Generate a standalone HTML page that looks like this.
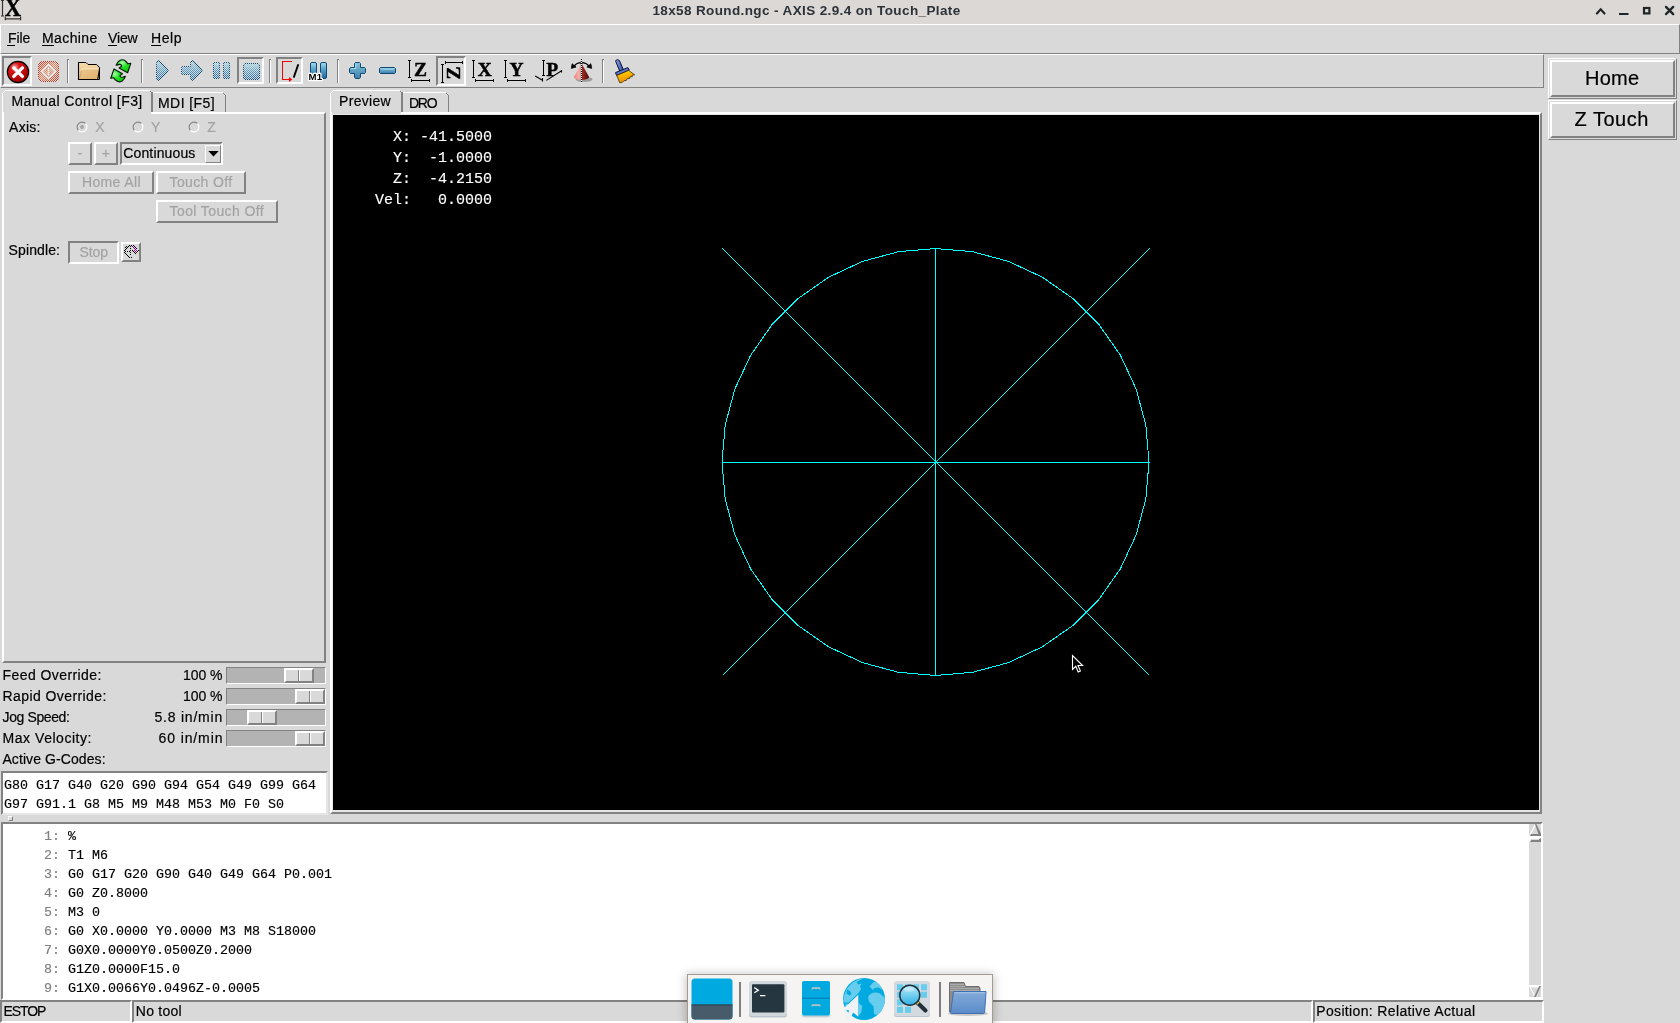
<!DOCTYPE html>
<html>
<head>
<meta charset="utf-8">
<title>18x58 Round.ngc - AXIS 2.9.4 on Touch_Plate</title>
<style>
*{box-sizing:border-box;margin:0;padding:0}
html,body{width:1680px;height:1023px;overflow:hidden;background:#d9d9d9}
body{font-family:"Liberation Sans",sans-serif;font-size:14px;letter-spacing:0.5px;color:#000;position:relative;-webkit-text-stroke:0.2px currentColor}
#root{position:absolute;left:0;top:0;width:1680px;height:1023px;will-change:transform;transform:translateZ(0)}
.a{position:absolute}
.t{position:absolute;white-space:nowrap;line-height:1}
.r1{border:1px solid;border-color:#fff #828282 #828282 #fff}
.r2{border:2px solid;border-color:#fff #828282 #828282 #fff}
.s1{border:1px solid;border-color:#828282 #fff #fff #828282}
.s2{border:2px solid;border-color:#828282 #fff #fff #828282}
.dis{color:#a3a3a3}
.mono{font-family:"Liberation Mono",monospace;letter-spacing:0;font-size:13.33px;white-space:pre;-webkit-text-stroke:0.15px currentColor}
.px{position:absolute;background:#fff}
.pd{position:absolute;background:#828282}
u{text-decoration:none;border-bottom:1px solid #000}
svg{position:absolute;overflow:visible}
</style>
</head>
<body>
<div id="root">
<div class="a" style="left:0;top:0;width:1680px;height:24px;background:#dcd8d5"></div>
<div class="t" style="left:0;top:4px;width:1613px;text-align:center;font-weight:bold;font-size:13.5px;color:#2c3237;letter-spacing:0.38px;-webkit-text-stroke:0">18x58 Round.ngc - AXIS 2.9.4 on Touch_Plate</div>
<!-- window icon -->
<svg style="left:0;top:0" width="24" height="22" viewBox="0 0 24 22">
 <text x="4.800" y="16.100" font-family="Liberation Serif" font-weight="bold" font-size="24.200" fill="#000" stroke="#000" stroke-width="0.450" letter-spacing="0" textLength="16.300" lengthAdjust="spacingAndGlyphs">X</text>
 <path d="M2.500 0v16M1 0.500h3M1 16h3M4.800 18.800h16M5.300 16.600v3.600M20.600 16.600v3.600" stroke="#333" stroke-width="1.200" fill="none"/>
</svg>
<!-- window buttons -->
<svg style="left:1590px;top:0" width="90" height="24" viewBox="1590 0 90 24">
 <path d="M1596.900 13.500l3.800-4.200 3.800 4.200" stroke="#1f2529" stroke-width="2.200" fill="none" stroke-linecap="round"/>
 <rect x="1619" y="13" width="9.5" height="2" fill="#1f2529"/>
 <rect x="1644" y="8" width="5.4" height="5.4" fill="none" stroke="#1f2529" stroke-width="2.2"/>
 <path d="M1666 6.900l7.200 7.200M1673.200 6.900l-7.200 7.200" stroke="#1f2529" stroke-width="2.300" stroke-linecap="round"/>
</svg>
<div class="a r1" style="left:0;top:24px;width:1680px;height:30px"></div>
<div class="t " style="left:8.0px;top:31px;letter-spacing:-0.05px;">File</div>
<div class="t " style="left:42.0px;top:31px;letter-spacing:0.4px;">Machine</div>
<div class="t " style="left:108.0px;top:31px;letter-spacing:-0.13px;">View</div>
<div class="t " style="left:151.0px;top:31px;letter-spacing:0.54px;">Help</div>
<div class="a" style="left:7px;top:45px;width:8px;height:1px;background:#000"></div>
<div class="a" style="left:42px;top:45px;width:12px;height:1px;background:#000"></div>
<div class="a" style="left:108px;top:45px;width:9px;height:1px;background:#000"></div>
<div class="a" style="left:151px;top:45px;width:10px;height:1px;background:#000"></div>
<div class="a r1" style="left:0;top:54px;width:1544px;height:34px"></div>
<div class="pd" style="left:67px;top:59px;width:1px;height:24px"></div><div class="px" style="left:68px;top:60px;width:1px;height:23px"></div><div class="pd" style="left:68px;top:59px;width:1px;height:1px"></div>
<div class="pd" style="left:141px;top:59px;width:1px;height:24px"></div><div class="px" style="left:142px;top:60px;width:1px;height:23px"></div><div class="pd" style="left:142px;top:59px;width:1px;height:1px"></div>
<div class="pd" style="left:269px;top:59px;width:1px;height:24px"></div><div class="px" style="left:270px;top:60px;width:1px;height:23px"></div><div class="pd" style="left:270px;top:59px;width:1px;height:1px"></div>
<div class="pd" style="left:337px;top:59px;width:1px;height:24px"></div><div class="px" style="left:338px;top:60px;width:1px;height:23px"></div><div class="pd" style="left:338px;top:59px;width:1px;height:1px"></div>
<div class="pd" style="left:602px;top:59px;width:1px;height:24px"></div><div class="px" style="left:603px;top:60px;width:1px;height:23px"></div><div class="pd" style="left:603px;top:59px;width:1px;height:1px"></div>
<div class="a s2" style="left:2px;top:56px;width:30px;height:30px"></div>
<div class="a s2" style="left:237px;top:57px;width:27px;height:27px"></div>
<div class="a s2" style="left:276px;top:57px;width:27px;height:27px"></div>
<div class="a s2" style="left:436px;top:56px;width:30px;height:30px"></div>
<svg style="left:0;top:54px" width="700" height="36" viewBox="0 54 700 36">
<defs>
 <pattern id="stbg" width="2" height="2" patternUnits="userSpaceOnUse"><rect x="1" y="0" width="1" height="1" fill="#d9d9d9"/><rect x="0" y="1" width="1" height="1" fill="#d9d9d9"/></pattern>
 <radialGradient id="gEs" cx="0.35" cy="0.28" r="0.75"><stop offset="0" stop-color="#f6a8a8"/><stop offset="0.300" stop-color="#d81414"/><stop offset="1" stop-color="#a40000"/></radialGradient>
 <linearGradient id="gBl" x1="0" y1="0" x2="0" y2="1"><stop offset="0" stop-color="#a8dcec"/><stop offset="0.45" stop-color="#58a0c8"/><stop offset="1" stop-color="#1f669c"/></linearGradient>
 <linearGradient id="gBl2" x1="0" y1="0" x2="0" y2="1"><stop offset="0" stop-color="#86c6de"/><stop offset="1" stop-color="#3b7eab"/></linearGradient>
 <linearGradient id="gFo" x1="0" y1="0" x2="0" y2="1"><stop offset="0" stop-color="#f6dcaa"/><stop offset="1" stop-color="#e2b777"/></linearGradient>
 <linearGradient id="gFo2" x1="0" y1="0" x2="1" y2="1"><stop offset="0" stop-color="#efc98f"/><stop offset="1" stop-color="#dcae6c"/></linearGradient>
 <radialGradient id="gGr" cx="0.42" cy="0.22" r="0.75"><stop offset="0" stop-color="#b4ffb4"/><stop offset="0.400" stop-color="#2ee42e"/><stop offset="1" stop-color="#06c006"/></radialGradient>
 <radialGradient id="gGr2" cx="0.750" cy="0.600" r="0.750"><stop offset="0" stop-color="#b4ffb4"/><stop offset="0.400" stop-color="#2ee42e"/><stop offset="1" stop-color="#06c006"/></radialGradient>
 <linearGradient id="gPw" x1="0" y1="0" x2="1" y2="1"><stop offset="0" stop-color="#d0361c"/><stop offset="0.5" stop-color="#e28a60"/><stop offset="1" stop-color="#c4341c"/></linearGradient>
 <linearGradient id="gCl" x1="0" y1="0" x2="1" y2="0"><stop offset="0" stop-color="#ee7a74"/><stop offset="0.6" stop-color="#f6b0aa"/><stop offset="1" stop-color="#e88a84"/></linearGradient>
 <linearGradient id="gCr" x1="0" y1="0" x2="1" y2="0"><stop offset="0" stop-color="#a83228"/><stop offset="1" stop-color="#4a0c08"/></linearGradient>
 <linearGradient id="gHa" x1="0" y1="0" x2="1" y2="0"><stop offset="0" stop-color="#8ea4e4"/><stop offset="1" stop-color="#2a46a6"/></linearGradient>
 <linearGradient id="gBr" x1="0" y1="0" x2="0.3" y2="1"><stop offset="0" stop-color="#ffe000"/><stop offset="1" stop-color="#f08c00"/></linearGradient>
</defs>
<circle cx="18" cy="72" r="10.6" fill="url(#gEs)" stroke="#000" stroke-width="1.2"/>
<path d="M13.8 67.8l8.6 8.6M22.4 67.8l-8.6 8.6" stroke="#fff" stroke-width="3.3" stroke-linecap="round"/>
<g>
<rect x="38.5" y="61.500" width="20" height="20" rx="4.500" fill="url(#gPw)" stroke="#b8341f" stroke-width="1"/>
<path d="M48.500 64.800l6.700 6.700-6.700 6.700-6.700-6.700z" fill="none" stroke="#fff" stroke-width="1.800" opacity="0.900"/>
<path d="M48.500 68v7" stroke="#fff" stroke-width="1.500" opacity="0.900"/>
<rect x="36" y="59" width="26" height="26" fill="url(#stbg)" shape-rendering="crispEdges"/>
</g>
<path d="M78.5 62.5h7.5l2 2h8.5l3 3v12h-21z" fill="url(#gFo)" stroke="#000" stroke-width="1" stroke-linejoin="round"/>
<path d="M79 79.5l2.300-9.300q0.400-1.600 1.900-1.600h16.300l-2 10.900z" fill="url(#gFo2)"/>
<path d="M81.200 70.400q0.400-1.600 1.900-1.600h16" stroke="#fdf0d4" stroke-width="0.900" fill="none"/>
<path d="M79.600 78.500l2-8" stroke="#caa066" stroke-width="0.800" fill="none"/>
<path d="M78.500 62.500v17h19.200l1.800-10.500v-1.500" stroke="#000" stroke-width="1.100" fill="none" stroke-linejoin="round"/>
<path d="M116.2 65.2C116.8 63.4 118 61.600 119.400 60.700C120.800 59.900 123.400 59.600 124.750 60.500C126 61.200 127.200 62.800 127.900 63.800L130.800 63.300 127.600 72.700 119.100 67.900 121.600 66.200C121.600 65.400 121.300 64.900 120.700 64.600C120 64.300 119 64.400 118.500 64.600C117.800 64.900 117 65.200 116.200 65.200Z" fill="url(#gGr)" stroke="#031c03" stroke-width="1.150" stroke-linejoin="round"/>
<path d="M116.2 65.2C116.8 63.4 118 61.600 119.400 60.700C120.800 59.900 123.400 59.600 124.750 60.500C126 61.200 127.200 62.800 127.900 63.800L130.800 63.300 127.600 72.700 119.100 67.900 121.600 66.200C121.600 65.400 121.300 64.900 120.700 64.600C120 64.300 119 64.400 118.500 64.600C117.800 64.900 117 65.200 116.200 65.200Z" fill="url(#gGr2)" stroke="#031c03" stroke-width="1.150" stroke-linejoin="round" transform="rotate(180 120.800 70.800)"/>
<g stroke="#0c4a74" stroke-width="1" fill="url(#gBl)">
<path d="M156.5 62.5l2-2 9.5 9.5v1l-9.5 9.5-2-2z"/>
<path d="M182.5 66.5h8v-4l2-2 9.5 9.5v1l-9.5 9.5-2-2v-4h-8l-1-1v-6z"/>
<rect x="213.5" y="62.5" width="6" height="16" rx="1.5"/>
<rect x="223.5" y="62.5" width="6" height="16" rx="1.5"/>
<rect x="243.5" y="63.5" width="16" height="16" rx="1.5"/>
</g>
<path d="M154 58h16v26h-16zM180 58h24v26h-24zM212 58h20v26h-20zM241 61h21v21h-21z" fill="url(#stbg)" shape-rendering="crispEdges"/>
<path d="M292 61.5h-9.5v18h8" stroke="#f00" stroke-width="1" fill="none" shape-rendering="crispEdges"/>
<path d="M289 77v5l3.4-2.5z" fill="#f00"/>
<path d="M298.3 64.2l-4.6 13.4" stroke="#000" stroke-width="1.9"/>
<rect x="310.5" y="62.5" width="6" height="16" rx="1.5" fill="url(#gBl)" stroke="#0c4a74"/>
<rect x="320.5" y="62.5" width="6" height="16" rx="1.5" fill="url(#gBl)" stroke="#0c4a74"/>
<text x="308.6" y="79.8" font-family="Liberation Sans" font-size="9.5" font-weight="bold" letter-spacing="0" textLength="13.4" lengthAdjust="spacingAndGlyphs" fill="#000" stroke="#fff" stroke-width="2.4" stroke-linejoin="round" paint-order="stroke">M1</text>
<path d="M355.5 62.5h4l1 1v4h4l1 1v4l-1 1h-4v4l-1 1h-4l-1-1v-4h-4l-1-1v-4l1-1h4v-4z" fill="url(#gBl2)" stroke="#0c4a74" stroke-width="1"/>
<path d="M355.7 64v4.5h-4.7" stroke="#b8e6f4" stroke-width="1" fill="none" opacity="0.8"/>
<path d="M380.5 67.5h14l1 1v4l-1 1h-14l-1-1v-4z" fill="url(#gBl2)" stroke="#0c4a74" stroke-width="1"/>
<path d="M381 69h13" stroke="#b8e6f4" stroke-width="1" opacity="0.8"/>
<g stroke="#000" stroke-width="1" fill="none" shape-rendering="crispEdges">
<path d="M409.5 60V78M408 60.5h3M408 77.5h3M411 80.5H430M411.5 79v3M429.5 79v3"/>
<path d="M442.5 64V83M441 64.5h3M441 82.5h3M445 62.5H463M445.5 61v3M462.5 61v3"/>
<path d="M473.5 60V78M472 60.5h3M472 77.5h3M475 80.5H494M475.5 79v3M493.5 79v3"/>
<path d="M505.5 60V78M504 60.5h3M504 77.5h3M507 80.5H526M507.5 79v3M525.5 79v3"/>
<path d="M543.5 60V76M542 60.5h3M542 75.5h3"/>
</g>
<g font-family="Liberation Serif" font-weight="bold" font-size="19.5" fill="#000" stroke="#000" stroke-width="0.45" letter-spacing="0">
<text x="414" y="75.8">Z</text>
<text x="477.8" y="75.8" textLength="14" lengthAdjust="spacingAndGlyphs">X</text>
<text x="509.6" y="75.8" textLength="14" lengthAdjust="spacingAndGlyphs">Y</text>
<text x="546.2" y="75.6" font-size="19.5">P</text>
<text transform="translate(460.2 79.5) rotate(-90)" x="0" y="0">Z</text>
</g>
<path d="M535.2 76l7.3 4.2M542.5 78v3.4M546.4 80.4l15.2-9.7M561.5 70v2.6" stroke="#000" stroke-width="1.1" fill="none"/>
<ellipse cx="584" cy="79.3" rx="8.5" ry="2.6" fill="#000" opacity="0.28"/>
<path d="M581.5 63.5L574 76.8a7.5 3 0 0 0 7.5 3.2z" fill="url(#gCl)"/>
<path d="M581.5 63.5L589 76.8a7.5 3 0 0 1-7.5 3.2z" fill="url(#gCr)"/>
<path d="M573.6 66.6Q576.5 62.9 580 62.6M583 62.6Q586.500 62.9 589.400 66.6" stroke="#000" stroke-width="1.2" fill="none"/>
<path d="M571.3 68.4l0.800-4.700 4 3.400zM591.700 68.400l-0.800-4.700-4 3.400z" fill="#000" stroke="#000" stroke-width="0.700" stroke-linejoin="round"/>
<circle cx="581.500" cy="63" r="1.300" fill="#fff" stroke="#000" stroke-width="0.800"/>
<path d="M581.5 59v24" stroke="#000" stroke-width="1" shape-rendering="crispEdges"/>
<path d="M581.5 60v24" stroke="#fff" stroke-width="1" stroke-dasharray="1 1" shape-rendering="crispEdges"/>
<path d="M615.6 61c0.6-1.8 3.2-1.8 4 0l4.2 9.6-3.6 1.8z" fill="url(#gHa)" stroke="#0a0f30" stroke-width="1" stroke-linejoin="round"/>
<path d="M615.5 72.6l12.4-5 1.4 2.6-12.6 5.4z" fill="#5a78cc" stroke="#0a0f30" stroke-width="1" stroke-linejoin="round"/>
<path d="M616.8 75.4l11.8-5 6 4.4-2.6 0.4 0.3 1.5-2.4 0.2-0.2 1.6-2.6 0.2-0.8 1.8-2.4 0.2-1.4 1.6-2.8 0.4z" fill="url(#gBr)" stroke="#2a1800" stroke-width="0.7" stroke-linejoin="round"/>
</svg>
<div class="a r1" style="left:1548px;top:58px;width:129px;height:41px"></div>
<div class="a r2" style="left:1550px;top:60px;width:125px;height:37px"></div>
<div class="t " style="left:1585.0px;top:68px;font-size:20px;letter-spacing:0.27px;">Home</div>
<div class="a r1" style="left:1548px;top:100px;width:129px;height:40px"></div>
<div class="a r2" style="left:1550px;top:102px;width:125px;height:36px"></div>
<div class="t " style="left:1574.5px;top:109px;font-size:20px;letter-spacing:0.5px;">Z Touch</div>
<div class="a r2" style="left:2px;top:112px;width:324px;height:551px"></div>
<div class="a" style="left:4px;top:112px;width:147px;height:2px;background:#d9d9d9"></div>
<div class="px" style="left:5px;top:90px;width:145px;height:1px"></div>
<div class="px" style="left:4px;top:91px;width:1px;height:1px"></div><div class="px" style="left:3px;top:92px;width:1px;height:1px"></div>
<div class="px" style="left:2px;top:93px;width:1px;height:20px"></div>
<div class="pd" style="left:150px;top:91px;width:1px;height:1px"></div>
<div class="pd" style="left:151px;top:92px;width:2px;height:20px"></div>
<div class="px" style="left:153px;top:92px;width:70px;height:1px"></div>
<div class="pd" style="left:223px;top:93px;width:1px;height:1px"></div><div class="pd" style="left:224px;top:94px;width:1px;height:1px"></div>
<div class="pd" style="left:225px;top:95px;width:1px;height:17px"></div>
<div class="t " style="left:11.4px;top:94px;letter-spacing:0.44px;">Manual Control [F3]</div>
<div class="t " style="left:158.0px;top:96px;letter-spacing:0.43px;">MDI [F5]</div>
<div class="t " style="left:9.1px;top:120px;letter-spacing:0.24px;">Axis:</div>
<svg style="left:75px;top:120px" width="14" height="14" viewBox="-7 -7 14 14">
 <circle r="4.6" fill="#d9d9d9"/>
 <path d="M-3.5 3.5A4.95 4.95 0 0 1 3.5 -3.5" stroke="#828282" stroke-width="1.1" fill="none"/>
 <path d="M3.5 -3.5A4.95 4.95 0 0 1 -3.5 3.5" stroke="#fff" stroke-width="1.1" fill="none"/>
 <circle r="1.9" fill="#a3a3a3"/>
</svg>
<div class="t dis" style="left:95.3px;top:120px;">X</div>
<svg style="left:131px;top:120px" width="14" height="14" viewBox="-7 -7 14 14">
 <circle r="4.6" fill="#d9d9d9"/>
 <path d="M-3.5 3.5A4.95 4.95 0 0 1 3.5 -3.5" stroke="#828282" stroke-width="1.1" fill="none"/>
 <path d="M3.5 -3.5A4.95 4.95 0 0 1 -3.5 3.5" stroke="#fff" stroke-width="1.1" fill="none"/>
 
</svg>
<div class="t dis" style="left:151px;top:120px;">Y</div>
<svg style="left:187px;top:120px" width="14" height="14" viewBox="-7 -7 14 14">
 <circle r="4.6" fill="#d9d9d9"/>
 <path d="M-3.5 3.5A4.95 4.95 0 0 1 3.5 -3.5" stroke="#828282" stroke-width="1.1" fill="none"/>
 <path d="M3.5 -3.5A4.95 4.95 0 0 1 -3.5 3.5" stroke="#fff" stroke-width="1.1" fill="none"/>
 
</svg>
<div class="t dis" style="left:207.2px;top:120px;">Z</div>
<div class="a r2" style="left:68px;top:142px;width:24px;height:23px"></div>
<div class="t dis" style="left:68px;top:146px;width:24px;text-align:center;">-</div>
<div class="a r2" style="left:94px;top:142px;width:24px;height:23px"></div>
<div class="t dis" style="left:94px;top:146px;width:24px;text-align:center;">+</div>
<div class="a s2" style="left:120px;top:142px;width:103px;height:23px"></div>
<div class="t " style="left:123.3px;top:146px;letter-spacing:0.13px;">Continuous</div>
<div class="a r1" style="left:205px;top:145px;width:16px;height:18px"></div>
<svg style="left:208px;top:150px" width="11" height="7" viewBox="0 0 11 7"><path d="M0.3 1h10.4L5.5 6.4z" fill="#000"/></svg>
<div class="a r2" style="left:68px;top:171px;width:86px;height:23px"></div>
<div class="t dis" style="left:81.9px;top:175px;letter-spacing:0.39px;">Home All</div>
<div class="a r2" style="left:156px;top:171px;width:90px;height:23px"></div>
<div class="t dis" style="left:169.6px;top:175px;letter-spacing:0.35px;">Touch Off</div>
<div class="a r2" style="left:156px;top:200px;width:122px;height:23px"></div>
<div class="t dis" style="left:169.6px;top:204px;letter-spacing:0.39px;">Tool Touch Off</div>
<div class="t " style="left:8.6px;top:243px;letter-spacing:0.11px;">Spindle:</div>
<div class="a s2" style="left:68px;top:241px;width:51px;height:23px"></div>
<div class="t dis" style="left:79.5px;top:245px;letter-spacing:-0.09px;">Stop</div>
<div class="a r2" style="left:121px;top:242px;width:20px;height:20px"></div>
<svg style="left:121px;top:242px" width="20" height="20" viewBox="121 242 20 20" shape-rendering="crispEdges">
<path d="M129 245h1v1h-1zM131 245h1v1h-1zM133 245h1v1h-1zM126 246h1v1h-1zM128 246h1v1h-1zM130 246h1v1h-1zM134 246h1v1h-1zM125 247h1v1h-1zM127 247h1v1h-1zM135 247h1v1h-1zM126 248h1v1h-1zM130 248h1v1h-1zM136 248h1v1h-1zM125 249h1v1h-1zM124 250h1v1h-1zM130 250h1v1h-1zM132 250h1v1h-1zM138 250h1v1h-1zM125 251h1v1h-1zM127 251h1v1h-1zM129 251h1v1h-1zM133 251h1v1h-1zM137 251h1v1h-1zM124 252h1v1h-1zM130 252h1v1h-1zM134 252h1v1h-1zM125 253h1v1h-1zM135 253h1v1h-1zM126 254h1v1h-1zM130 254h1v1h-1zM127 255h1v1h-1zM128 256h1v1h-1zM129 257h1v1h-1zM131 257h1v1h-1z" fill="#000"/><path d="M132 246h1v1h-1zM133 247h1v1h-1zM134 248h1v1h-1zM135 249h1v1h-1zM134 250h1v1h-1zM136 250h1v1h-1zM135 251h1v1h-1z" fill="#a000a0"/><path d="M136 252h1v1h-1z" fill="#800000"/>
</svg>
<div class="t " style="left:2.6px;top:668px;letter-spacing:0.42px;">Feed Override:</div>
<div class="t " style="left:182.9px;top:668px;letter-spacing:-0.02px;">100 %</div>
<div class="a s1" style="left:226px;top:667px;width:100px;height:17px;background:#b3b3b3"></div>
<div class="a r2" style="left:284px;top:668px;width:30px;height:15px;background:#d9d9d9"></div>
<div class="pd" style="left:298px;top:670px;width:1px;height:11px"></div>
<div class="px" style="left:299px;top:670px;width:1px;height:11px"></div>
<div class="t " style="left:2.6px;top:689px;letter-spacing:0.41px;">Rapid Override:</div>
<div class="t " style="left:182.9px;top:689px;letter-spacing:-0.02px;">100 %</div>
<div class="a s1" style="left:226px;top:688px;width:100px;height:17px;background:#b3b3b3"></div>
<div class="a r2" style="left:295px;top:689px;width:30px;height:15px;background:#d9d9d9"></div>
<div class="pd" style="left:309px;top:691px;width:1px;height:11px"></div>
<div class="px" style="left:310px;top:691px;width:1px;height:11px"></div>
<div class="t " style="left:2.6px;top:710px;letter-spacing:-0.4px;">Jog Speed:</div>
<div class="t " style="left:154.5px;top:710px;letter-spacing:0.78px;">5.8 in/min</div>
<div class="a s1" style="left:226px;top:709px;width:100px;height:17px;background:#b3b3b3"></div>
<div class="a r2" style="left:247px;top:710px;width:30px;height:15px;background:#d9d9d9"></div>
<div class="pd" style="left:261px;top:712px;width:1px;height:11px"></div>
<div class="px" style="left:262px;top:712px;width:1px;height:11px"></div>
<div class="t " style="left:2.6px;top:731px;letter-spacing:0.53px;">Max Velocity:</div>
<div class="t " style="left:158.5px;top:731px;letter-spacing:0.89px;">60 in/min</div>
<div class="a s1" style="left:226px;top:730px;width:100px;height:17px;background:#b3b3b3"></div>
<div class="a r2" style="left:295px;top:731px;width:30px;height:15px;background:#d9d9d9"></div>
<div class="pd" style="left:309px;top:733px;width:1px;height:11px"></div>
<div class="px" style="left:310px;top:733px;width:1px;height:11px"></div>
<div class="t " style="left:2.4px;top:752px;letter-spacing:0.09px;">Active G-Codes:</div>
<div class="a" style="left:1px;top:771px;width:327px;height:44px;background:#fff;border:2px solid;border-color:#828282 #e6e6e6 #e6e6e6 #828282"></div>
<div class="t mono" style="left:4px;top:779px;">G80 G17 G40 G20 G90 G94 G54 G49 G99 G64</div>
<div class="t mono" style="left:4px;top:798px;">G97 G91.1 G8 M5 M9 M48 M53 M0 F0 S0</div>
<div class="a r1" style="left:8px;top:816px;width:5px;height:5px"></div>
<div class="a r2" style="left:330px;top:112px;width:1212px;height:702px"></div>
<div class="a" style="left:332px;top:114px;width:1208px;height:698px;background:#000;border:1px solid #e6e6e6;border-bottom-width:2px"></div>
<div class="a" style="left:332px;top:112px;width:69px;height:2px;background:#d9d9d9"></div>
<div class="px" style="left:333px;top:90px;width:67px;height:1px"></div>
<div class="px" style="left:332px;top:91px;width:1px;height:1px"></div><div class="px" style="left:331px;top:92px;width:1px;height:1px"></div>
<div class="px" style="left:330px;top:93px;width:1px;height:20px"></div>
<div class="pd" style="left:400px;top:91px;width:1px;height:1px"></div>
<div class="pd" style="left:401px;top:92px;width:2px;height:20px"></div>
<div class="px" style="left:403px;top:92px;width:43px;height:1px"></div>
<div class="pd" style="left:446px;top:93px;width:1px;height:1px"></div><div class="pd" style="left:447px;top:94px;width:1px;height:1px"></div>
<div class="pd" style="left:448px;top:95px;width:1px;height:17px"></div>
<div class="t " style="left:339.0px;top:94px;letter-spacing:0.32px;">Preview</div>
<div class="t " style="left:409.0px;top:96px;letter-spacing:-1.29px;">DRO</div>
<div class="t mono" style="left:375px;top:130px;font-size:15px;color:#fff;">  X: -41.5000</div>
<div class="t mono" style="left:375px;top:151px;font-size:15px;color:#fff;">  Y:  -1.0000</div>
<div class="t mono" style="left:375px;top:172px;font-size:15px;color:#fff;">  Z:  -4.2150</div>
<div class="t mono" style="left:375px;top:193px;font-size:15px;color:#fff;">Vel:   0.0000</div>
<svg style="left:0;top:0" width="1680" height="1023" viewBox="0 0 1680 1023" shape-rendering="crispEdges">
 <g stroke="#00ffff" stroke-width="1" fill="none">
 <polyline points="935.5,248.5 972.6,251.7 1008.5,261.4 1042.2,277.1 1072.7,298.4 1099.1,324.8 1120.4,355.2 1136.1,389.0 1145.8,424.9 1149.0,462.0 1145.8,499.1 1136.1,535.0 1120.4,568.8 1099.1,599.2 1072.7,625.6 1042.2,646.9 1008.5,662.6 972.6,672.3 935.5,675.5 898.4,672.3 862.5,662.6 828.8,646.9 798.3,625.6 771.9,599.2 750.6,568.8 734.9,535.0 725.2,499.1 722.0,462.0 725.2,424.9 734.9,389.0 750.6,355.3 771.9,324.8 798.3,298.4 828.8,277.1 862.5,261.4 898.4,251.7 935.5,248.5"/>
 <path d="M722 462.5H1150M935.5 248V676M722.5 248.5L1149.5 675.5M1149.5 248.5L722.5 675.5"/>
 </g>
</svg>
<svg style="left:1071px;top:654px" width="14" height="20" viewBox="0 0 14 20">
 <path d="M1.5 1.5v14l3.3-3.2 2.4 5.6 2.2-1-2.4-5.4h4.6z" fill="#000" stroke="#fff" stroke-width="1.1"/>
</svg>
<div class="a" style="left:1px;top:822px;width:1542px;height:178px;background:#fff;border:2px solid;border-color:#828282 #fff #fff #828282"></div>
<div class="t mono" style="left:4px;top:830px;"><span style="color:#808080">     1: </span>%</div>
<div class="t mono" style="left:4px;top:849px;"><span style="color:#808080">     2: </span>T1 M6</div>
<div class="t mono" style="left:4px;top:868px;"><span style="color:#808080">     3: </span>G0 G17 G20 G90 G40 G49 G64 P0.001</div>
<div class="t mono" style="left:4px;top:887px;"><span style="color:#808080">     4: </span>G0 Z0.8000</div>
<div class="t mono" style="left:4px;top:906px;"><span style="color:#808080">     5: </span>M3 0</div>
<div class="t mono" style="left:4px;top:925px;"><span style="color:#808080">     6: </span>G0 X0.0000 Y0.0000 M3 M8 S18000</div>
<div class="t mono" style="left:4px;top:944px;"><span style="color:#808080">     7: </span>G0X0.0000Y0.0500Z0.2000</div>
<div class="t mono" style="left:4px;top:963px;"><span style="color:#808080">     8: </span>G1Z0.0000F15.0</div>
<div class="t mono" style="left:4px;top:982px;"><span style="color:#808080">     9: </span>G1X0.0066Y0.0496Z-0.0005</div>
<svg style="left:1529px;top:824px" width="12" height="174" viewBox="1529 824 12 174">
 <rect x="1529" y="824" width="12" height="174" fill="#fff"/>
 <rect x="1529" y="824" width="12" height="12" fill="#d9d9d9"/>
 <rect x="1529" y="842" width="12" height="143" fill="#d9d9d9"/>
 <rect x="1529" y="986" width="12" height="11" fill="#d9d9d9"/>
 <!-- up arrow -->
 <path d="M1535 824L1529 835.500L1530 836L1536 825z" fill="#fff"/>
 <path d="M1535 824h1.300L1541 833.600V836H1530l1-2h7.400z" fill="#828282"/>
 <!-- thumb -->
 <rect x="1529" y="837" width="12" height="5" fill="#d9d9d9"/>
 <path d="M1529 837h12v2h-10v3h-2z" fill="#fff"/>
 <path d="M1541 838v4h-11l1-2h8v-1z" fill="#828282"/>
 <!-- down arrow -->
 <path d="M1529 986h10v1.500h-8.300L1535.300 996h-1.300z" fill="#fff"/>
 <path d="M1541 986L1535.800 997h-1.800L1539.200 986z" fill="#828282"/>
</svg>
<div class="a s2" style="left:0;top:1000px;width:132px;height:23px"></div>
<div class="a s2" style="left:132px;top:1000px;width:1181px;height:23px"></div>
<div class="a s2" style="left:1313px;top:1000px;width:231px;height:23px"></div>
<div class="t " style="left:3.6px;top:1004px;letter-spacing:-1.13px;">ESTOP</div>
<div class="t " style="left:135.8px;top:1004px;letter-spacing:0.24px;">No tool</div>
<div class="t " style="left:1316.2px;top:1004px;letter-spacing:0.36px;">Position: Relative Actual</div>
<div class="a" style="left:687px;top:974px;width:306px;height:60px;background:#f5f4f2;border:1px solid #a39b92;box-shadow:0 1px 9px 1px rgba(0,0,0,0.240)"></div>
<svg style="left:687px;top:974px" width="306" height="49" viewBox="687 974 306 49">
<defs>
 <linearGradient id="dGl" x1="0" y1="0" x2="0" y2="1"><stop offset="0" stop-color="#b8e8f8"/><stop offset="1" stop-color="#2eb2e4"/></linearGradient>
 <linearGradient id="dFb" x1="0" y1="0" x2="0" y2="1"><stop offset="0" stop-color="#84abd9"/><stop offset="1" stop-color="#5a8bc8"/></linearGradient>
 <clipPath id="gc"><circle cx="864" cy="999" r="21"/></clipPath>
</defs>
<!-- show desktop -->
<rect x="691.5" y="978.5" width="41" height="41" rx="3.5" fill="#00a9e0"/>
<path d="M691.5 1005h41v11a3.5 3.5 0 0 1-3.5 3.5h-34a3.5 3.5 0 0 1-3.5-3.5z" fill="#475b6a"/>
<rect x="691.5" y="1004.3" width="41" height="1.2" fill="#2f4250"/>
<rect x="739" y="982" width="2" height="35" fill="#7f7f7f"/>
<!-- terminal -->
<rect x="749" y="981.5" width="38" height="36" rx="2.5" fill="#bcc5cd"/>
<rect x="749" y="981.5" width="38" height="34.5" rx="2.5" fill="#d0d7dd"/>
<rect x="752" y="984.3" width="32.4" height="28.2" rx="1" fill="#263640"/>
<path d="M754.3 987.6l4 2.6-4 2.6M760 995.6h5.4" stroke="#fff" stroke-width="1.3" fill="none"/>
<!-- file cabinet -->
<rect x="802" y="982" width="28" height="35.4" rx="2" fill="#c6d0d8"/>
<rect x="802" y="981" width="28" height="34.4" rx="2" fill="#00a9e0"/>
<rect x="802" y="997.5" width="28" height="1.4" fill="#0089bd"/>
<path d="M812 990.3v-2.1h8v2.1M812 1007.3v-2.1h8v2.1" stroke="#9aa3aa" stroke-width="1.2" fill="none"/>
<path d="M812 988.2h8M812 1005.2h8" stroke="#c8d0d6" stroke-width="1.2"/>
<!-- globe -->
<circle cx="864" cy="999" r="21" fill="#00a9e0"/>
<g clip-path="url(#gc)" fill="#66cdee">
 <path d="M864 978l-6 1.500-6 3.500-5 5.500-3 7-1 7h5.500l4.500-4 5-5 3.200-4.500-1.200-2.500 1.500-3-3.500 1-1.500-2.500z"/>
 <path d="M847 989.500l3 1.500 1.500 3-2 1.500-3-2z" fill="#00a9e0"/>
 <path d="M869.500 986.500l3.500-4 5-1.500 4 2.500 3 5.500-3 0.500-3.500-2-4 0.500-1.500 2z"/>
 <path d="M868 997c2-4.500 8-6 12.500-3l4 3.500 1 5-2.500 7-4.500 6-4.500-1.500-0.500-7.500-4.500-5z"/>
 <path d="M858.600 1003l3.600 3-0.800 6-2.800 4z"/>
 <path d="M846 1003.500l5 1-3 4.500-3.500-1z"/>
</g>
<path d="M858.300 994.800L842.600 1009.400l6.600 1-3.600 8.600 3.800 1.800 3.800-8.400 5.100 4.400z" fill="#eef1f5"/>
<!-- app finder -->
<rect x="894" y="981.5" width="36" height="35.600" rx="2.5" fill="#bcc5cd"/>
<rect x="894" y="981.5" width="36" height="34.400" rx="2.5" fill="#d3d9de"/>
<g fill="#66cdee">
 <rect x="897" y="984.300" width="6" height="6"/><rect x="905" y="984.300" width="6" height="6"/><rect x="913" y="984.300" width="6" height="6"/><rect x="921" y="984.300" width="6" height="6"/>
 <rect x="897" y="991.800" width="6" height="6"/><rect x="921" y="991.800" width="6" height="6"/>
 <rect x="897" y="999.300" width="6" height="6"/>
 <rect x="897" y="1006.800" width="6" height="6"/><rect x="905" y="1006.800" width="6" height="6"/>
</g>
<path d="M917.500 1002.800l8 7.600" stroke="#22303a" stroke-width="4.200" stroke-linecap="round"/>
<path d="M916.600 1002l1.800 1.700" stroke="#e8c040" stroke-width="3"/>
<circle cx="909.800" cy="995.200" r="10" fill="url(#dGl)" stroke="#22303a" stroke-width="1.500"/>
<ellipse cx="909" cy="989.500" rx="5" ry="2.200" fill="#fff" opacity="0.350"/>
<rect x="939" y="982" width="2" height="35" fill="#7f7f7f"/>
<!-- folder -->
<ellipse cx="968" cy="1013.500" rx="20" ry="2.500" fill="#000" opacity="0.180"/>
<path d="M949.500 982.500h14.500l1.500 4h13.500l1 1.500v24h-30.500z" fill="#8d8d8d" stroke="#6e6e6e" stroke-width="1"/>
<path d="M950 984.500h14M950 986.500h15M950 988.500h29M950 990.500h29" stroke="#b4b4b4" stroke-width="0.800"/>
<path d="M953.500 991.500h32.500l-1.400 21q-0.100 1-1.100 1h-32q-1 0-0.900-1z" fill="url(#dFb)" stroke="#3f6fb3" stroke-width="1"/>
<path d="M954.500 992.700h30.300" stroke="#a9c5e8" stroke-width="1"/>
</svg>
</div>
</body>
</html>
